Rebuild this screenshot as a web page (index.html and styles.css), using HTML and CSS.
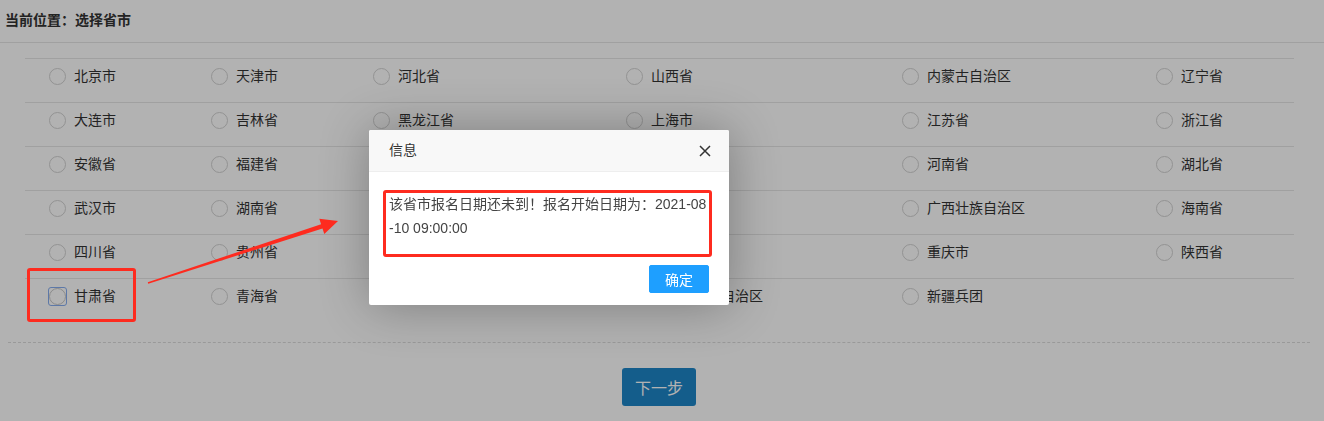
FILE: index.html
```html
<!DOCTYPE html>
<html lang="zh-CN">
<head>
    <meta charset="UTF-8">
    <meta name="viewport" content="width=device-width, initial-scale=1.0">
    <title>选择省市</title>
    <link rel="stylesheet" href="styles.css">
</head>
<body>
    <div class="crumb">当前位置：选择省市</div>
    <table class="areas">
        <colgroup>
            <col style="width:162px"><col style="width:162px"><col style="width:253px">
            <col style="width:276px"><col style="width:254px"><col style="width:162px">
        </colgroup>
        <tr>
            <td><label><input type="radio" name="area" class="radio">北京市</label></td>
            <td><label><input type="radio" name="area" class="radio">天津市</label></td>
            <td><label><input type="radio" name="area" class="radio">河北省</label></td>
            <td><label><input type="radio" name="area" class="radio">山西省</label></td>
            <td><label><input type="radio" name="area" class="radio">内蒙古自治区</label></td>
            <td><label><input type="radio" name="area" class="radio">辽宁省</label></td>
        </tr>
        <tr>
            <td><label><input type="radio" name="area" class="radio">大连市</label></td>
            <td><label><input type="radio" name="area" class="radio">吉林省</label></td>
            <td><label><input type="radio" name="area" class="radio">黑龙江省</label></td>
            <td><label><input type="radio" name="area" class="radio">上海市</label></td>
            <td><label><input type="radio" name="area" class="radio">江苏省</label></td>
            <td><label><input type="radio" name="area" class="radio">浙江省</label></td>
        </tr>
        <tr>
            <td><label><input type="radio" name="area" class="radio">安徽省</label></td>
            <td><label><input type="radio" name="area" class="radio">福建省</label></td>
            <td><label><input type="radio" name="area" class="radio">江西省</label></td>
            <td><label><input type="radio" name="area" class="radio">山东省</label></td>
            <td><label><input type="radio" name="area" class="radio">河南省</label></td>
            <td><label><input type="radio" name="area" class="radio">湖北省</label></td>
        </tr>
        <tr>
            <td><label><input type="radio" name="area" class="radio">武汉市</label></td>
            <td><label><input type="radio" name="area" class="radio">湖南省</label></td>
            <td><label><input type="radio" name="area" class="radio">广东省</label></td>
            <td><label><input type="radio" name="area" class="radio">深圳市</label></td>
            <td><label><input type="radio" name="area" class="radio">广西壮族自治区</label></td>
            <td><label><input type="radio" name="area" class="radio">海南省</label></td>
        </tr>
        <tr>
            <td><label><input type="radio" name="area" class="radio">四川省</label></td>
            <td><label><input type="radio" name="area" class="radio">贵州省</label></td>
            <td><label><input type="radio" name="area" class="radio">云南省</label></td>
            <td><label><input type="radio" name="area" class="radio">西藏自治区</label></td>
            <td><label><input type="radio" name="area" class="radio">重庆市</label></td>
            <td><label><input type="radio" name="area" class="radio">陕西省</label></td>
        </tr>
        <tr>
            <td><label><span class="ring"><input type="radio" name="area" class="radio"></span>甘肃省</label></td>
            <td><label><input type="radio" name="area" class="radio">青海省</label></td>
            <td><label><input type="radio" name="area" class="radio">宁夏回族自治区</label></td>
            <td><label><input type="radio" name="area" class="radio">新疆维吾尔自治区</label></td>
            <td><label><input type="radio" name="area" class="radio">新疆兵团</label></td>
            <td></td>
        </tr>
    </table>
    <div class="footer">
        <button class="next">下一步</button>
    </div>

    <div class="shade"></div>

    <div class="layer">
        <div class="layer-title">信息
            <svg class="layer-close" width="12" height="12" viewBox="0 0 12 12">
                <path d="M1 1 L11 11 M11 1 L1 11" stroke="#333" stroke-width="1.5" fill="none"/>
            </svg>
        </div>
        <div class="layer-content">该省市报名日期还未到！报名开始日期为：2021-08<wbr><span class="nowrap">-10</span> 09:00:00</div>
        <div class="layer-btns"><button class="layer-btn">确定</button></div>
        <div class="mark mark-msg"></div>
    </div>

    <!-- annotations -->
    <div class="mark mark-gansu"></div>
    <svg class="arrow" width="1324" height="421" viewBox="0 0 1324 421">
        <polygon points="147.75,282.24 321.1,224.2 319.3,218.7 338,221 324.3,233.9 322.5,228.4 148.25,283.76" fill="#fe2b1f"/>
    </svg>
</body>
</html>
```

FILE: styles.css
```css
body {
    margin: 0;
    font-family: "Liberation Sans", "Noto Sans CJK SC", sans-serif;
    font-size: 14px;
    color: #333;
    background: #fff;
    height: 421px;
    overflow: hidden;
}
.crumb {
    height: 43px;
    line-height: 40px;
    padding-left: 5px;
    font-weight: bold;
    border-bottom: 1px solid #e5e5e5;
    box-sizing: border-box;
}
.areas {
    margin: 15px 0 0 25px;
    width: 1269px;
    table-layout: fixed;
    border-collapse: collapse;
}
.areas td {
    border-top: 1px solid #e6e6e6;
    padding: 7px 0 16px 24px;
    height: 20px;
    line-height: 20px;
    white-space: nowrap;
}
.areas label {
    display: flex;
    align-items: center;
    height: 20px;
}
.radio {
    appearance: none;
    -webkit-appearance: none;
    width: 17px;
    height: 17px;
    margin: 0 8px 0 0;
    border: 1px solid #d2d2d2;
    border-radius: 50%;
    background: #fff;
    box-sizing: border-box;
}
.ring {
    display: inline-flex;
    margin: 0 7px 0 -1px;
    border: 1.5px solid #86adf0;
    border-radius: 3px;
}
.ring .radio {
    margin: 0;
    border-color: #c8c8c8;
}
.footer {
    margin: 20px 14px 0 8px;
    padding-top: 25px;
    border-top: 1px dashed #dcdcdc;
    text-align: center;
}
.next {
    height: 38px;
    padding: 0 13px;
    border: none;
    border-radius: 3px;
    background: #1e86c8;
    color: #fff;
    font-family: inherit;
    font-size: 16px;
}
.shade {
    position: fixed;
    inset: 0;
    background: rgba(0, 0, 0, 0.3);
}
.layer {
    position: absolute;
    left: 369px;
    top: 130px;
    width: 360px;
    background: #fff;
    border-radius: 2px;
    box-shadow: 1px 1px 50px rgba(0, 0, 0, 0.3);
}
.layer-title {
    position: relative;
    height: 42px;
    line-height: 41px;
    padding: 0 80px 0 20px;
    background: #f8f8f8;
    border-bottom: 1px solid #eee;
    border-radius: 2px 2px 0 0;
    box-sizing: border-box;
}
.layer-close {
    position: absolute;
    right: 18px;
    top: 15px;
}
.layer-content {
    padding: 20px;
    line-height: 24px;
    color: #444;
}
.nowrap {
    white-space: nowrap;
}
.layer-btns {
    padding: 0 15px 12px;
    text-align: right;
}
.layer-btn {
    height: 28px;
    margin: 5px 5px 0;
    padding: 0 15px;
    border: 1px solid #1e9fff;
    border-radius: 2px;
    background: #1e9fff;
    color: #fff;
    font-family: inherit;
    font-size: 14px;
}
.mark {
    position: absolute;
    border: 3px solid #fe2b1f;
    border-radius: 3px;
    box-sizing: border-box;
}
.mark-msg {
    left: 14px;
    top: 60px;
    width: 329px;
    height: 67px;
}
.mark-gansu {
    left: 27px;
    top: 268px;
    width: 109px;
    height: 54px;
}
.arrow {
    position: absolute;
    left: 0;
    top: 0;
    pointer-events: none;
}
```
